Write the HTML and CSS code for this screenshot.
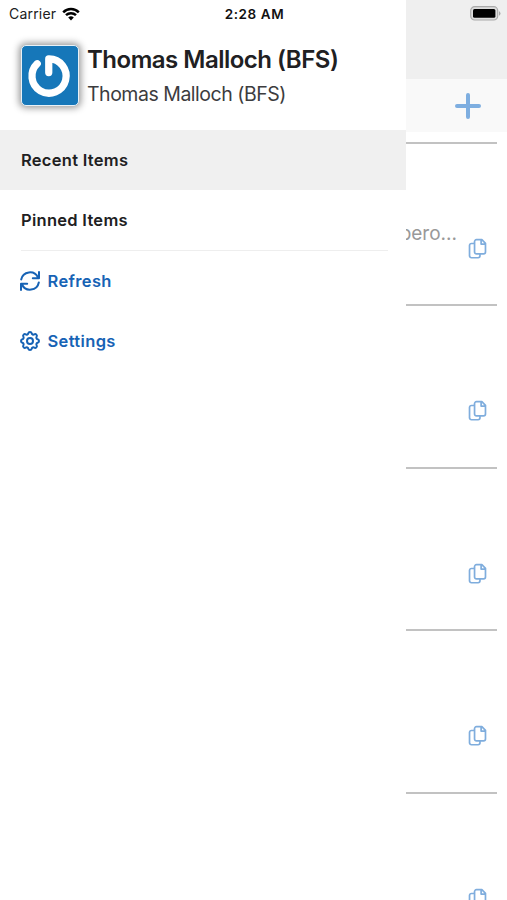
FILE: index.html
```html
<!DOCTYPE html>
<html lang="en">
<head>
<meta charset="utf-8">
<title>Account menu</title>
<link rel="stylesheet" href="styles.css">
</head>
<body>
<svg class="defs" aria-hidden="true">
  <symbol id="copy" viewBox="0 0 20 22">
    <path d="M6 5.2H3.6A2 2 0 0 0 1.6 7.2V18.2A2 2 0 0 0 3.6 20.2H10.6A2 2 0 0 0 12.6 18.2V16.4M8.9 1.2H14.6L18.4 5V14.1A2 2 0 0 1 16.4 16.1H8.9A2 2 0 0 1 6.9 14.1V3.2A2 2 0 0 1 8.9 1.2ZM13.8 1.4V5.8H18.2"/>
  </symbol>
</svg>
<div class="phone">
  <header class="status">
    <div class="carrier"><span>Carrier</span>
      <svg class="wifi" viewBox="0 0 18 14"><path d="M1.2 5.3a11 11 0 0 1 15.6 0M4 8.2a7.1 7.1 0 0 1 10 0"/><path class="dot" d="M9 13.4 6.2 10.6a4 4 0 0 1 5.6 0Z"/></svg>
    </div>
    <div class="time">2:28 AM</div>
    <svg class="battery" viewBox="0 0 31 15"><rect class="case" x=".7" y=".7" width="27" height="13.3" rx="4"/><rect x="3" y="3" width="22.4" height="8.8" rx="1.5"/><path class="tip" d="M29 5q3 2.4 0 4.8z"/></svg>
  </header>
  <aside class="drawer">
    <div class="profile">
      <svg class="avatar" viewBox="0 0 58 60"><path d="M15.8 17.8A17.7 17.7 0 1 0 27.7 12.9V27"/></svg>
      <div><h1>Thomas Malloch (BFS)</h1><p>Thomas Malloch (BFS)</p></div>
    </div>
    <nav>
      <a class="item selected">Recent Items</a>
      <a class="item">Pinned Items</a>
      <hr>
      <a class="item action"><svg viewBox="0 0 20 20"><path d="M1.2 8.5A8.9 8.9 0 0 1 18 6.5M19 1V7.2H12.8M18.8 11.5A8.9 8.9 0 0 1 2 13.5M1 19V12.8H7.2"/></svg>Refresh</a>
      <a class="item action"><svg viewBox="2 2 20 20"><path d="M10.325 4.317c.426-1.756 2.924-1.756 3.35 0a1.724 1.724 0 0 0 2.573 1.066c1.543-.94 3.31.826 2.37 2.37a1.724 1.724 0 0 0 1.065 2.572c1.756.426 1.756 2.924 0 3.35a1.724 1.724 0 0 0-1.066 2.573c.94 1.543-.826 3.31-2.37 2.37a1.724 1.724 0 0 0-2.572 1.065c-.426 1.756-2.924 1.756-3.35 0a1.724 1.724 0 0 0-2.573-1.066c-1.543.94-3.31-.826-2.37-2.37a1.724 1.724 0 0 0-1.065-2.572c-1.756-.426-1.756-2.924 0-3.35a1.724 1.724 0 0 0 1.066-2.573c-.94-1.543.826-3.31 2.37-2.37 1 .608 2.296.07 2.572-1.065z"/><circle cx="12" cy="12" r="3"/></svg>Settings</a>
    </nav>
  </aside>
  <main class="page">
    <div class="band"></div>
    <div class="toolbar"><svg viewBox="0 0 26 26"><path d="M13 2V24M2 13H24"/></svg></div>
    <div class="list">
      <div class="row"><span class="snippet">pero...</span><svg><use href="#copy"/></svg></div>
      <div class="row"><svg><use href="#copy"/></svg></div>
      <div class="row"><svg><use href="#copy"/></svg></div>
      <div class="row"><svg><use href="#copy"/></svg></div>
      <div class="row"><svg><use href="#copy"/></svg></div>
    </div>
  </main>
</div>
</body>
</html>
```
FILE: styles.css
```css
* { box-sizing: border-box; }
body { margin: 0; font-family: Inter, "Liberation Sans", sans-serif; color: #202022; background: #fff; }
svg { fill: none; flex: none; stroke-linecap: round; stroke-linejoin: round; }
.defs { display: none; }
.phone { position: relative; display: grid; grid-template-columns: 406px 101px; width: 507px; height: 900px; overflow: hidden; }
.status { position: absolute; inset: 0 0 auto; height: 27px; display: grid; grid-template-columns: 1fr auto 1fr; align-items: center; padding: 0 6px 0 9px; z-index: 2; }
.carrier { display: flex; align-items: center; gap: 6px; font-size: 14px; letter-spacing: .2px; }
.wifi { width: 18px; height: 14px; stroke: #000; stroke-width: 2.5; stroke-linecap: butt; }
.wifi .dot { fill: #000; stroke: none; }
.time { font-size: 13.5px; font-weight: 600; letter-spacing: .6px; color: #111; margin-right: 1px; }
.battery { width: 31px; height: 15px; justify-self: end; fill: #000; }
.battery .case { fill: #ddd; stroke: #aaa; stroke-width: 1.2; }
.battery .tip { fill: #aaa; }
.drawer { background: #fff; }
.profile { height: 130px; display: flex; padding: 45px 0 0 21px; gap: 8px; }
.avatar { width: 58px; height: 61px; background: #1677b9; border: 1px solid #e8f1f7; border-radius: 5px; box-shadow: 0 0 7px 2px #999; stroke: #fff; stroke-width: 7.5; }
h1, p { margin: 0; white-space: nowrap; }
h1 { font-size: 24px; line-height: 30px; font-weight: 600; letter-spacing: -.5px; }
p { margin-top: 6px; font-size: 19.5px; line-height: 27px; letter-spacing: -.48px; color: #3c3c3e; }
.item { display: flex; align-items: center; height: 60px; padding: 0 0 0 21px; font-size: 16.5px; font-weight: 600; letter-spacing: .28px; }
.selected { background: #f0f0f0; }
hr { height: 1px; margin: 0 18px 0 21px; border: 0; background: #eee; }
.action { color: #1763b5; padding: 0 0 0 20px; gap: 7.5px; letter-spacing: .35px; }
.action svg { width: 20px; height: 20px; stroke: #1763b5; stroke-width: 2; }
.page { background: #fff; overflow: hidden; }
.band { height: 79px; background: #efefef; }
.toolbar { height: 53px; background: #f9f9f9; display: flex; align-items: center; justify-content: flex-end; padding-right: 26px; }
.toolbar svg { width: 26px; height: 26px; stroke: #7eaee0; stroke-width: 4; }
.list { margin: 9.5px 10px 0 0; }
.row { height: 162.5px; border-top: 2px solid #c2c2c2; display: flex; align-items: flex-start; justify-content: flex-end; padding: 94px 10px 0 0; }
.row svg { width: 19px; height: 22px; stroke: #7faddd; stroke-width: 1.8; }
.snippet { margin: -17px 11px 0 0; font-size: 19px; line-height: 26px; color: #999; }
```
